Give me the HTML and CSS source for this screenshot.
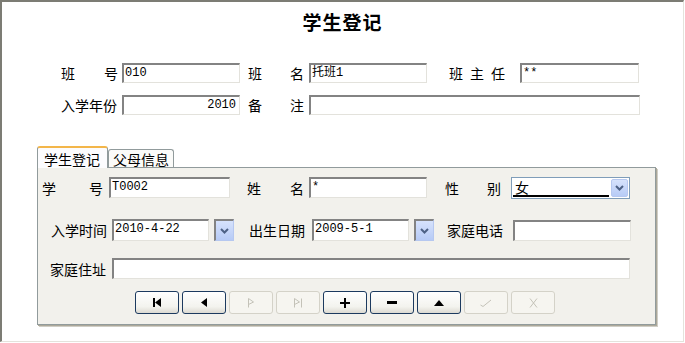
FILE: index.html
```html
<!DOCTYPE html>
<html lang="zh-CN">
<head>
    <meta charset="UTF-8">
    <title>学生登记</title>
    <link rel="stylesheet" href="styles.css">
</head>
<body>
    <div class="frame">
        <h1 class="title">学生登记</h1>

        <div class="class-info">
            <div class="row row-1">
                <span class="lbl lbl-a"><i>班</i><i>号</i></span>
                <span class="box box-a">010</span>
                <span class="lbl lbl-b"><i>班</i><i>名</i></span>
                <span class="box box-b">托班1</span>
                <span class="lbl lbl-c"><i>班</i><i>主</i><i>任</i></span>
                <span class="box box-c">**</span>
            </div>
            <div class="row row-2">
                <span class="lbl lbl-a">入学年份</span>
                <span class="box box-a num">2010</span>
                <span class="lbl lbl-b"><i>备</i><i>注</i></span>
                <span class="box box-wide"></span>
            </div>
        </div>

        <div class="tabs">
            <div class="tab active">学生登记</div>
            <div class="tab">父母信息</div>
        </div>

        <div class="panel">
            <div class="prow prow-1">
                <span class="lbl p-lbl-a"><i>学</i><i>号</i></span>
                <span class="box p-box-a">T0002</span>
                <span class="lbl p-lbl-b"><i>姓</i><i>名</i></span>
                <span class="box p-box-b">*</span>
                <span class="lbl p-lbl-c"><i>性</i><i>别</i></span>
                <span class="select">
                    <span class="select-text">女</span>
                    <span class="drop"><svg width="9" height="6" viewBox="0 0 9 6"><path d="M1 1 L4.5 4.5 L8 1" fill="none" stroke="#4d6185" stroke-width="2"/></svg></span>
                </span>
            </div>
            <div class="prow prow-2">
                <span class="lbl p-lbl-d">入学时间</span>
                <span class="box p-date">2010-4-22</span>
                <span class="drop drop-solo"><svg width="9" height="6" viewBox="0 0 9 6"><path d="M1 1 L4.5 4.5 L8 1" fill="none" stroke="#4d6185" stroke-width="2"/></svg></span>
                <span class="lbl p-lbl-e">出生日期</span>
                <span class="box p-date p-date-2">2009-5-1</span>
                <span class="drop drop-solo"><svg width="9" height="6" viewBox="0 0 9 6"><path d="M1 1 L4.5 4.5 L8 1" fill="none" stroke="#4d6185" stroke-width="2"/></svg></span>
                <span class="lbl p-lbl-f">家庭电话</span>
                <span class="box p-box-c"></span>
            </div>
            <div class="prow prow-3">
                <span class="lbl p-lbl-g">家庭住址</span>
                <span class="box p-box-addr"></span>
            </div>
            <div class="nav">
                <button class="nbtn"><svg width="10" height="9" viewBox="0 0 10 9"><rect x="1" y="0" width="2" height="9" fill="#000"/><path d="M9 0 L3 4.5 L9 9 Z" fill="#000"/></svg></button>
                <button class="nbtn"><svg width="8" height="9" viewBox="0 0 8 9"><path d="M7 0 L1 4.5 L7 9 Z" fill="#000"/></svg></button>
                <button class="nbtn off"><svg width="8" height="10" viewBox="0 0 8 10"><path d="M1.5 0.5 L1.5 9.5 M1.5 0.5 L6.5 4 L1.5 6.5" fill="none" stroke="#c4c2b8" stroke-width="1"/></svg></button>
                <button class="nbtn off"><svg width="10" height="10" viewBox="0 0 10 10"><path d="M1.5 0.5 L1.5 9.5 M1.5 0.5 L6.5 4 L1.5 6.5 M8.5 0.5 L8.5 9.5" fill="none" stroke="#c4c2b8" stroke-width="1"/></svg></button>
                <button class="nbtn"><svg width="10" height="10" viewBox="0 0 10 10"><path d="M4 0 H6 V4 H10 V6 H6 V10 H4 V6 H0 V4 H4 Z" fill="#000"/></svg></button>
                <button class="nbtn"><svg width="10" height="3" viewBox="0 0 10 3"><rect x="0" y="0" width="10" height="3" fill="#000"/></svg></button>
                <button class="nbtn"><svg width="10" height="6" viewBox="0 0 10 6"><path d="M0 6 L5 0 L10 6 Z" fill="#000"/></svg></button>
                <button class="nbtn off"><svg width="12" height="8" viewBox="0 0 12 8"><path d="M0.5 6 L3 7.5 L11 1" fill="none" stroke="#c4c2b8" stroke-width="1"/></svg></button>
                <button class="nbtn off"><svg width="9" height="10" viewBox="0 0 9 10"><path d="M1 0.5 L8 9.5 M8 0.5 L1 9.5" fill="none" stroke="#c4c2b8" stroke-width="1"/></svg></button>
            </div>
        </div>
    </div>
</body>
</html>
```

FILE: styles.css
```css
/* form window */
body {
    margin: 0;
    padding: 0;
    background-color: #ffffff;
    font-family: "Noto Sans CJK SC", "DejaVu Sans", sans-serif;
    font-size: 14px;
    color: #000;
}
.frame {
    width: 684px;
    height: 342px;
    box-sizing: border-box;
    border-top: 2px solid #7c7c74;
    border-left: 2px solid #7c7c74;
    border-right: 1px solid #e4e3dc;
    border-bottom: 1px solid #e4e3dc;
    background-color: #ffffff;
}
.title {
    margin: 0;
    padding-top: 8px;
    height: 35px;
    box-sizing: border-box;
    text-align: center;
    font-size: 19px;
    font-weight: bold;
    line-height: 24px;
    letter-spacing: 1px;
}

/* top fields */
.class-info {
    padding-top: 26px;
}
.row {
    display: flex;
    align-items: center;
    height: 20px;
}
.row-2 {
    margin-top: 12px;
}
.lbl {
    display: flex;
    justify-content: space-between;
    white-space: nowrap;
    line-height: 20px;
}
.lbl i {
    font-style: normal;
}
.lbl-a { width: 57px; margin-left: 59px; }
.lbl-b { width: 56px; margin-left: 8px; }
.lbl-c { width: 56px; margin-left: 22px; }

.box {
    display: block;
    height: 20px;
    box-sizing: border-box;
    background-color: #fff;
    border-top: 2px solid #838383;
    border-left: 2px solid #838383;
    border-right: 1px solid #e3e2dc;
    border-bottom: 1px solid #e3e2dc;
    font-family: "Liberation Mono", "Noto Sans CJK SC", monospace;
    font-size: 12px;
    line-height: 17px;
    padding-left: 1px;
    white-space: nowrap;
    overflow: hidden;
}
.box.num {
    text-align: right;
    padding-right: 3px;
}
.box-a { width: 118px; margin-left: 4px; }
.box-b { width: 118px; margin-left: 5px; }
.box-c { width: 119px; margin-left: 15px; }
.box-wide { width: 331px; margin-left: 5px; }

/* tabs */
.tabs {
    display: flex;
    align-items: flex-end;
    margin-top: 31px;
    padding-left: 35px;
    height: 21px;
}
.tab {
    height: 18px;
    box-sizing: border-box;
    padding: 0 4px;
    border: 1px solid #919b9c;
    border-bottom: none;
    background-color: #fbfbf9;
    font-size: 14px;
    line-height: 18px;
    border-radius: 3px 3px 0 0;
}
.tab.active {
    height: 22px;
    width: 71px;
    padding: 2px 0 0 6px;
    border-top: 2px solid #f3b64a;
    background-color: #fcfcfe;
    position: relative;
    z-index: 1;
    margin-bottom: -1px;
    line-height: 18px;
}

.panel {
    width: 619px;
    height: 158px;
    box-sizing: border-box;
    margin-left: 35px;
    border: 1px solid #919b9c;
    background-color: #f2f1ec;
    box-shadow: 1px 1px 0 #aca899, 2px 2px 0 #d0cec6;
    padding-top: 9px;
}

.prow {
    display: flex;
    align-items: center;
    height: 21px;
}
.prow-2 { margin-top: 21px; height: 22px; }
.prow-3 { margin-top: 17px; }

.p-lbl-a { width: 61px; margin-left: 4px; }
.p-box-a { width: 121px; margin-left: 6px; height: 21px; }
.p-lbl-b { width: 57px; margin-left: 17px; }
.p-box-b { width: 118px; margin-left: 5px; height: 21px; }
.p-lbl-c { width: 56px; margin-left: 18px; }

.select {
    display: flex;
    align-items: center;
    width: 119px;
    height: 22px;
    box-sizing: border-box;
    margin-left: 10px;
    border: 1px solid #7f9db9;
    background-color: #fff;
    padding: 1px;
}
.select-text {
    flex: 1;
    height: 16px;
    margin-right: 2px;
    border-bottom: 2px solid #000;
    font-size: 14px;
    line-height: 16px;
    padding-left: 2px;
}
.drop {
    display: flex;
    align-items: center;
    justify-content: center;
    width: 17px;
    height: 18px;
    box-sizing: border-box;
    border: 1px solid #b6c8f0;
    border-radius: 2px;
    background: linear-gradient(#d6e2fc, #b7cbf6);
}
.drop-solo {
    width: 20px;
    height: 22px;
    margin-left: 5px;
    border-left: 2px solid #838383;
    border-top: 2px solid #838383;
    border-radius: 0;
}

.p-lbl-d { width: 56px; margin-left: 13px; }
.p-date { width: 97px; margin-left: 5px; height: 22px; }
.p-date-2 { margin-left: 6px; }
.p-lbl-e { width: 57px; margin-left: 15px; }
.p-lbl-f { width: 58px; margin-left: 13px; }
.p-box-c { width: 118px; margin-left: 8px; height: 21px; }

.p-lbl-g { width: 57px; margin-left: 12px; }
.p-box-addr { width: 518px; margin-left: 5px; height: 21px; }

/* record navigator */
.nav {
    display: flex;
    gap: 3px;
    margin-top: 12px;
    padding-left: 97px;
}
.nbtn {
    width: 44px;
    height: 23px;
    padding: 0;
    display: flex;
    align-items: center;
    justify-content: center;
    border: 1px solid #1c3a5f;
    border-radius: 3px;
    background: linear-gradient(#ffffff, #f3f3ee 70%, #dcdad2);
}
.nbtn.off {
    border-color: #d4d2c8;
    background: #f6f5f0;
}
```
